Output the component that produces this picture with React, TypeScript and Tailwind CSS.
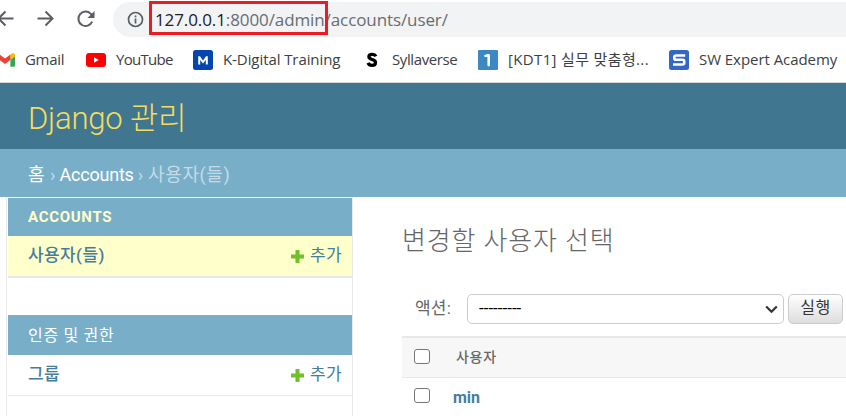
import type { ReactNode } from "react";

const chromeFont = "font-['Open_Sans','Noto_Sans_CJK_KR',sans-serif]";
const pageFont = "font-[Roboto,'Noto_Sans_CJK_KR',sans-serif]";

function GmailIcon() {
  return (
    <svg width="20" height="20" viewBox="0 0 20 20">
      <path d="M0 5V15.400a1.300 1.300 0 0 0 1.300 1.300H4.600V8.800Z" fill="#4285f4" />
      <path d="M15.400 8.800V16.700H18.700A1.300 1.300 0 0 0 20 15.400V5Z" fill="#34a853" />
      <path d="M15.400 4.400V10L20 6.500V5a1.900 1.900 0 0 0-3-1.600Z" fill="#fbbc04" />
      <path d="M4.600 10V4.400L10 8.400l5.400-4V10L10 14Z" fill="#ea4335" />
      <path d="M0 5v1.500L4.600 10V4.400L3 3.400A1.900 1.900 0 0 0 0 5Z" fill="#c5221f" />
    </svg>
  );
}

function YouTubeIcon() {
  return (
    <svg width="20" height="20" viewBox="0 0 20 20">
      <rect y="3" width="20" height="14" rx="3.200" fill="#f00" />
      <path d="M8 7.300v5.400l4.800-2.700Z" fill="#fff" />
    </svg>
  );
}

function KDigitalIcon() {
  return (
    <svg width="20" height="20" viewBox="0 0 20 20">
      <rect width="20" height="20" rx="2.500" fill="#0445af" />
      <path d="M5.200 14.500V6.200h1.800L10 10.600 13 6.200H14.800v8.300h-2V10L10 13.600 7.200 10v4.500Z" fill="#fff" />
    </svg>
  );
}

function SyllaverseIcon() {
  return (
    <svg width="20" height="20" viewBox="0 0 20 20">
      <path
        d="M14 6.200C13.200 4.800 12 4.300 10.300 4.300c-2 0-3.400.8-3.400 2.400 0 3.600 6.600 2 6.600 5.700 0 1.900-1.500 2.900-3.500 2.900-1.900 0-3.300-.8-4-2.500"
        fill="none"
        stroke="#000"
        strokeWidth="3.300"
      />
    </svg>
  );
}

function OneIcon() {
  return (
    <svg width="20" height="20" viewBox="0 0 20 20">
      <rect width="20" height="20" rx="1" fill="#3b88c3" />
      <path d="M6.300 6c0-.8.400-1.100 1.200-1.200 1.100-.2 1.700-.8 2.900-.8 1 0 1.600.6 1.600 1.500v9.300c0 1-.6 1.600-1.300 1.600s-1.300-.6-1.300-1.600V7.100H7.500c-.8 0-1.200-.5-1.200-1.100Z" fill="#fff" />
    </svg>
  );
}

function ExpertIcon() {
  return (
    <svg width="20" height="20" viewBox="0 0 20 20">
      <rect width="20" height="20" rx="2.500" fill="#3468c4" />
      <path d="M16.200 5.500H7c-1.200 0-1.700.5-1.700 1.500v1.300c0 1 .5 1.500 1.700 1.500h6.500c1.200 0 1.700.5 1.700 1.500v1.700c0 1-.5 1.500-1.700 1.500H4" fill="none" stroke="#fff" strokeWidth="2.600" />
    </svg>
  );
}

function Bookmark({ icon, label, text }: { icon: ReactNode; label: string; text: string }) {
  return (
    <div className="flex h-5 items-center whitespace-nowrap">
      <span className="mr-2.5 h-5 w-5 shrink-0">{icon}</span>
      <span className={`-mt-[2px] ${text}`}>{label}</span>
    </div>
  );
}

function Toolbar() {
  return (
    <div className="flex h-[37px] pt-[2px]">
      <svg className="shrink-0" width="113" height="35" viewBox="0 0 113 35" fill="none" stroke="#5b5f64" strokeWidth="2">
        <path d="M13.500 16.500H-1M5.500 9.500l-7 7 7 7" />
        <path d="M37.500 16.500H53M45.500 9.500l7 7-7 7" />
        <path d="M92.200 19.700a7.200 7.200 0 1 1-1.600-8.100l2 2" />
        <path d="M94.500 9v7h-7Z" fill="#5b5f64" stroke="none" />
      </svg>
      <div className="flex flex-1 items-center rounded-l-full bg-[#f1f3f4] pl-[14px]">
        <svg className="mr-[4px] shrink-0" width="17" height="17" viewBox="0 0 17 17" fill="none" stroke="#5b5f64">
          <circle cx="8.500" cy="8.500" r="7" strokeWidth="1.700" />
          <path d="M8.500 7.600v4.800M8.500 4.600v1.700" strokeWidth="1.700" />
        </svg>
        <div className="relative flex h-[35px] items-center whitespace-nowrap pl-[7px] text-[17px] tracking-[-0.100px] text-[#696d71]">
          <span className="text-[#202124]">127.0.0.1</span>
          <span>:8000/admin/accounts/user/</span>
          <span className="absolute -top-px left-[1px] h-[34px] w-[179px] border-3 border-[#ed1c24]" />
        </div>
      </div>
    </div>
  );
}

function Bookmarks() {
  return (
    <div className="-ml-[5px] grid h-[45px] grid-cols-[91px_107px_169px_116px_191px_1fr] pt-[13px] text-[15px] text-[#3c4043]">
      <Bookmark icon={<GmailIcon />} label="Gmail" text="tracking-[-0.300px]" />
      <Bookmark icon={<YouTubeIcon />} label="YouTube" text="tracking-[-0.700px]" />
      <Bookmark icon={<KDigitalIcon />} label="K-Digital Training" text="tracking-[-0.080px]" />
      <Bookmark icon={<SyllaverseIcon />} label="Syllaverse" text="tracking-[-0.400px]" />
      <Bookmark icon={<OneIcon />} label="[KDT1] 실무 맞춤형..." text="tracking-[0.350px]" />
      <Bookmark icon={<ExpertIcon />} label="SW Expert Academy" text="tracking-[-0.050px]" />
    </div>
  );
}

function ModelRow({ name, nameStyle, className }: { name: string; nameStyle: string; className: string }) {
  return (
    <div className={`flex items-center justify-between pr-[10px] pl-5 text-[#447e9b] ${className}`}>
      <span className={`text-[17px] font-medium ${nameStyle}`}>{name}</span>
      <span className="flex items-center text-[17px] tracking-[0.300px]">
        <svg className="mr-[6px]" width="13" height="13" viewBox="0 0 13 13">
          <path d="M4.500 0h4v4.500H13v4H8.500V13h-4V8.500H0v-4h4.500Z" fill="#70bf2b" />
        </svg>
        추가
      </span>
    </div>
  );
}

function Sidebar() {
  return (
    <aside className="h-[219px] w-[347px] shrink-0 border-x border-[#eaeaea] pt-px pl-px">
      <h2 className="h-[38px] bg-[#79aec8] pl-5 text-[15px] leading-[38px] font-bold tracking-[0.700px] text-[#ffffcc]">ACCOUNTS</h2>
      <ModelRow name="사용자(들)" nameStyle="tracking-[0.400px]" className="h-[42px] border-b-2 border-[#e8e8e8] bg-[#ffffcc]" />
      <h2 className="mt-[37px] h-10 bg-[#79aec8] pl-5 text-[16px] leading-[41px] tracking-[0.700px] text-white">인증 및 권한</h2>
      <ModelRow name="그룹" nameStyle="tracking-[0.400px]" className="h-[41px] border-b border-[#eaeaea]" />
    </aside>
  );
}

function Checkbox() {
  return <span className="-mt-[3px] block h-[15px] w-4 rounded-[3px] border-[1.500px] border-[#767676] bg-white" />;
}

function Content() {
  return (
    <main className="min-w-0 flex-1 pl-[49px] text-[#666]">
      <h1 className="h-[97px] pt-[26px] text-[26px] leading-[36px] font-light tracking-[0.850px]">변경할 사용자 선택</h1>
      <div className="flex h-[30px] items-center pr-[3px] pl-[13px]">
        <span className="w-[52px] text-[17px] tracking-[0.200px]">액션:</span>
        <div className="flex h-[30px] w-[317px] items-center justify-between rounded-[5px] border border-[#ccc] pr-[5px] pl-[11px] text-[17px] text-black">
          <span>---------</span>
          <svg width="13" height="9" viewBox="0 0 13 9" fill="none" stroke="#333" strokeWidth="2.200">
            <path d="M1.200 1.500 6.500 6.800l5.300-5.300" />
          </svg>
        </div>
        <button className="ml-1 h-[30px] w-[55px] rounded-[5px] border border-[#ccc] bg-linear-to-b from-white to-[#ddd] pb-[2px] text-[16px] tracking-[0.500px] text-[#333]">실행</button>
      </div>
      <div className="mt-3 flex h-[42px] items-center border-t-2 border-b border-[#e8e8e8] bg-[#f7f7f7] pl-3">
        <Checkbox />
        <span className="ml-[26px] text-[14px] font-medium tracking-[0.700px]">사용자</span>
      </div>
      <div className="flex h-[38px] items-center pl-3">
        <Checkbox />
        <span className="ml-[23px] pt-[2px] text-[16px] font-bold text-[#447e9b]">min</span>
      </div>
    </main>
  );
}

export default function App() {
  return (
    <div className={`h-[416px] w-[846px] overflow-hidden bg-white ${pageFont}`}>
      <div className={`h-[83px] border-b border-[#d8d4dc] ${chromeFont}`}>
        <Toolbar />
        <Bookmarks />
      </div>
      <header className="h-[66px] bg-[#417690] pl-7 text-[31px] leading-[72px] font-light tracking-[-0.200px] text-[#f5dd5d]">Django 관리</header>
      <nav className="flex h-12 items-center gap-1 bg-[#79aec8] pt-[2px] pl-7 text-[18px] text-[#c4dce8]">
        <span className="w-[18px] text-white">홈</span>
        <span>›</span>
        <span className="tracking-[-0.200px] text-white">Accounts</span>
        <span>›</span>
        <span className="pl-px tracking-[0.600px]">사용자(들)</span>
      </nav>
      <div className="flex pl-[6px]">
        <Sidebar />
        <Content />
      </div>
    </div>
  );
}
